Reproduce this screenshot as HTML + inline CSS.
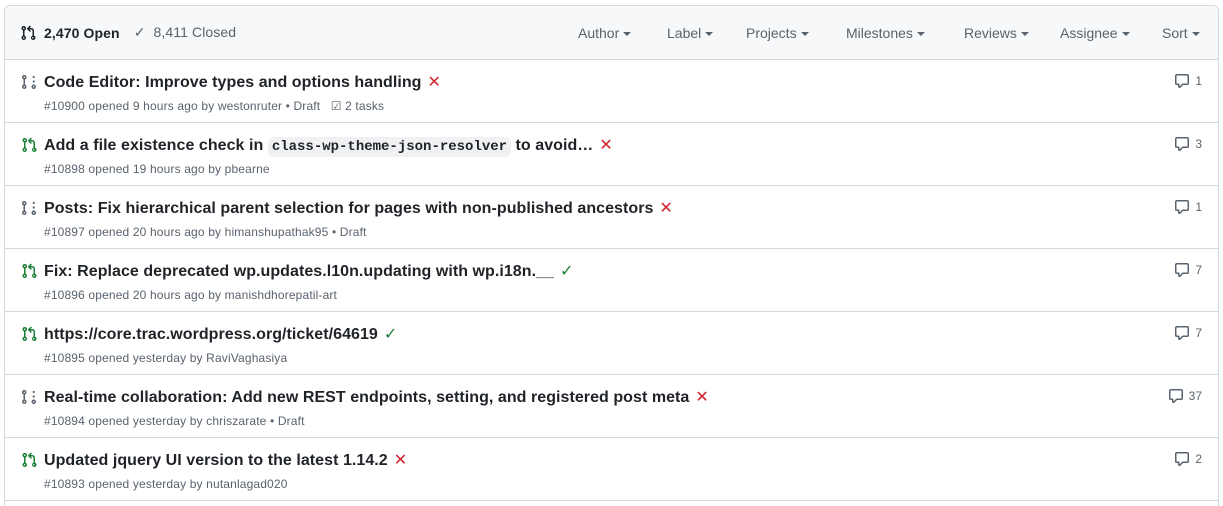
<!DOCTYPE html>
<html><head><meta charset="utf-8"><style>
html,body{margin:0;background:#fff;font-family:"Liberation Sans",sans-serif;color:#1f2328;width:1223px;height:506px;overflow:hidden}
.box{position:absolute;left:4px;top:5px;width:1215px;height:501px;border:1px solid #d1d9e0;border-bottom:0;border-radius:6px 6px 0 0;overflow:hidden;box-sizing:border-box}
.hdr{height:53px;background:#f6f8fa;border-bottom:1px solid #d1d9e0;position:relative;font-size:14px}
.hdr .l{position:absolute;left:15px;top:18px;display:flex;align-items:center}
.hdr .f{position:absolute;top:19px;color:#59636e}
.car{display:inline-block;border-left:4px solid transparent;border-right:4px solid transparent;border-top:4px solid #59636e;vertical-align:middle;margin-left:4px}
.row{height:62px;border-bottom:1px solid #d1d9e0;position:relative}
.ic{position:absolute;left:16px;top:14px}
.t{position:absolute;left:39px;top:12px;font-size:16px;font-weight:bold;white-space:nowrap;letter-spacing:0.05px}
.m{position:absolute;left:39px;top:39px;font-size:12px;color:#59636e;white-space:nowrap;letter-spacing:0.15px}
.c{position:absolute;right:16px;top:13px;font-size:12px;color:#59636e;display:flex;align-items:center;gap:5px}
.x{color:#d1242f;font-weight:normal;margin-left:6px}
.ok{color:#1a7f37;font-weight:normal;margin-left:6px}
code{font-family:"Liberation Mono",monospace;background:#eff1f3;border-radius:6px;padding:2px 4px;font-size:14px;letter-spacing:0}
</style></head><body>
<div class="box">
<div class="hdr">
<div class="l"><svg width="16" height="16" viewBox="0 0 16 16" fill="#1f2328"><path d="M1.5 3.25a2.25 2.25 0 1 1 3 2.12v5.26a2.25 2.25 0 1 1-1.5 0V5.37a2.25 2.25 0 0 1-1.5-2.12Zm5.72.97a.75.75 0 0 1 0-1.06l2.25-2.25a.75.75 0 0 1 1.06 1.06L9.56 3h1.690A2.75 2.75 0 0 1 14 5.75v4.88a2.25 2.25 0 1 1-1.5 0V5.75c0-.69-.56-1.25-1.25-1.25H9.56l.97.97a.75.75 0 0 1-1.06 1.06ZM3.75 2.5a.75.75 0 1 0 0 1.5.75.75 0 0 0 0-1.5Zm0 9.5a.75.75 0 1 0 0 1.5.75.75 0 0 0 0-1.5Zm8.25.75a.75.75 0 1 0 1.5 0 .75.75 0 0 0-1.5 0Z"/></svg>
<b style="margin-left:8px;letter-spacing:0.1px">2,470 Open</b>
<span style="margin-left:14px;color:#59636e;letter-spacing:0.1px">✓&nbsp; 8,411 Closed</span></div>
<span class="f" style="left:573px">Author<i class="car"></i></span>
<span class="f" style="left:662px">Label<i class="car"></i></span>
<span class="f" style="left:741px">Projects<i class="car"></i></span>
<span class="f" style="left:841px">Milestones<i class="car"></i></span>
<span class="f" style="left:959px">Reviews<i class="car"></i></span>
<span class="f" style="left:1055px">Assignee<i class="car"></i></span>
<span class="f" style="left:1157px">Sort<i class="car"></i></span>
</div>

<div class="row"><span class="ic">D</span><div class="t">Code Editor: Improve types and options handling<span class="x">✕</span></div><div class="m">#10900 opened 9 hours ago by westonruter • Draft &nbsp; ☑ 2 tasks</div><div class="c">🗨 1</div></div>
<div class="row"><span class="ic">O</span><div class="t">Add a file existence check in <code>class-wp-theme-json-resolver</code> to avoid…<span class="x">✕</span></div><div class="m">#10898 opened 19 hours ago by pbearne</div><div class="c">🗨 3</div></div>
<div class="row"><span class="ic">D</span><div class="t">Posts: Fix hierarchical parent selection for pages with non-published ancestors<span class="x">✕</span></div><div class="m">#10897 opened 20 hours ago by himanshupathak95 • Draft</div><div class="c">🗨 1</div></div>
<div class="row"><span class="ic">O</span><div class="t">Fix: Replace deprecated wp.updates.l10n.updating with wp.i18n.__<span class="ok">✓</span></div><div class="m">#10896 opened 20 hours ago by manishdhorepatil-art</div><div class="c">🗨 7</div></div>
<div class="row"><span class="ic">O</span><div class="t">https://core.trac.wordpress.org/ticket/64619<span class="ok">✓</span></div><div class="m">#10895 opened yesterday by RaviVaghasiya</div><div class="c">🗨 7</div></div>
<div class="row"><span class="ic">D</span><div class="t">Real-time collaboration: Add new REST endpoints, setting, and registered post meta<span class="x">✕</span></div><div class="m">#10894 opened yesterday by chriszarate • Draft</div><div class="c">🗨 37</div></div>
<div class="row"><span class="ic">O</span><div class="t">Updated jquery UI version to the latest 1.14.2<span class="x">✕</span></div><div class="m">#10893 opened yesterday by nutanlagad020</div><div class="c">🗨 2</div></div>
</div>
<script>
var open='<svg width="16" height="16" viewBox="0 0 16 16" fill="#1a7f37"><path d="M1.5 3.25a2.25 2.25 0 1 1 3 2.12v5.26a2.25 2.25 0 1 1-1.5 0V5.37a2.25 2.25 0 0 1-1.5-2.12Zm5.72.97a.75.75 0 0 1 0-1.06l2.25-2.25a.75.75 0 0 1 1.06 1.06L9.56 3h1.69A2.75 2.75 0 0 1 14 5.75v4.88a2.25 2.25 0 1 1-1.5 0V5.75c0-.69-.56-1.25-1.25-1.25H9.56l.97.97a.75.75 0 0 1-1.06 1.06ZM3.75 2.5a.75.75 0 1 0 0 1.5.75.75 0 0 0 0-1.5Zm0 9.5a.75.75 0 1 0 0 1.5.75.75 0 0 0 0-1.5Zm8.25.75a.75.75 0 1 0 1.5 0 .75.75 0 0 0-1.5 0Z"/></svg>';
var draft='<svg width="16" height="16" viewBox="0 0 16 16" fill="#59636e"><path d="M3.25 1A2.25 2.25 0 0 1 4 5.37v5.26a2.25 2.25 0 1 1-1.5 0V5.37A2.25 2.25 0 0 1 3.25 1Zm0 11a.75.75 0 1 0 0 1.5.75.75 0 0 0 0-1.5ZM3.25 2.5a.75.75 0 1 0 0 1.5.75.75 0 0 0 0-1.5Z"/><circle cx="12.75" cy="3" r="1.1"/><circle cx="12.75" cy="7.5" r="1.1"/><path d="M12.75 10.5a2.25 2.25 0 1 1 0 4.5 2.25 2.25 0 0 1 0-4.5Zm0 1.5a.75.75 0 1 0 0 1.5.75.75 0 0 0 0-1.5Z"/></svg>';
var cm='<svg width="16" height="16" viewBox="0 0 16 16" fill="#59636e"><path d="M1 2.75C1 1.78 1.78 1 2.75 1h10.5c.97 0 1.75.78 1.75 1.75v7.5A1.75 1.75 0 0 1 13.25 12H9.06l-2.57 2.57A1.46 1.46 0 0 1 4 13.54V12H2.75A1.75 1.75 0 0 1 1 10.25Zm1.75-.25a.25.25 0 0 0-.25.25v7.5c0 .14.11.25.25.25h2a.75.75 0 0 1 .75.75v2.19l2.72-2.72a.75.75 0 0 1 .53-.22h4.5a.25.25 0 0 0 .25-.25v-7.5a.25.25 0 0 0-.25-.25Z"/></svg>';
document.querySelectorAll('.ic').forEach(function(e){e.innerHTML=e.textContent=='O'?open:draft});
document.querySelectorAll('.c').forEach(function(e){e.innerHTML=cm+e.textContent.replace('🗨','')});
</script>
</body></html>
